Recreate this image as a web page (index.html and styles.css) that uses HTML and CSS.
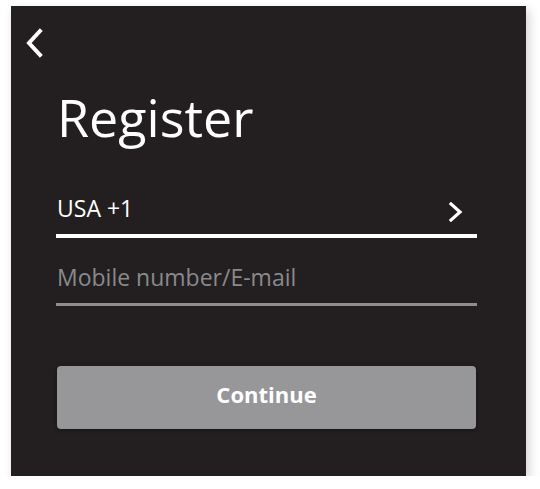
FILE: index.html
```html
<!DOCTYPE html>
<html lang="en">
<head>
<meta charset="utf-8">
<title>Register</title>
<link rel="stylesheet" href="styles.css">
</head>
<body>
<div class="panel">
  <div class="back">
    <svg width="20" height="30" viewBox="0 0 20 30"><polyline points="15,3 4,15 15,27" fill="none" stroke="#fff" stroke-width="4" stroke-linecap="square" stroke-linejoin="miter"/></svg>
  </div>
  <div class="content">
    <h1 class="title">Register</h1>
    <div class="field field-country">
      <span class="country">USA +1</span>
      <svg class="chev" width="14" height="20" viewBox="0 0 14 20"><polyline points="2,2 11,10 2,18" fill="none" stroke="#fff" stroke-width="3.2" stroke-linecap="square"/></svg>
    </div>
    <div class="field field-mobile">
      <span class="placeholder">Mobile number/E-mail</span>
    </div>
    <button class="btn">Continue</button>
  </div>
</div>
</body>
</html>
```
FILE: styles.css
```css
html, body {
  margin: 0;
  padding: 0;
  background: #ffffff;
}
body {
  font-family: "Open Sans", "Noto Sans", sans-serif;
}
.panel {
  margin: 6px 0 0 11px;
  width: 515px;
  height: 470px;
  background: #231f20;
  box-shadow: 3px 4px 10px rgba(0, 0, 0, 0.18);
  display: flex;
  flex-direction: column;
}
.back {
  height: 30px;
  margin: 22px 0 0 14px;
}
.back svg {
  display: block;
}
.content {
  padding: 0 49px 0 45px;
  display: flex;
  flex-direction: column;
}
.title {
  margin: 29px 0 0 1px;
  font-weight: 400;
  font-size: 52px;
  line-height: 60px;
  color: #ffffff;
}
.field {
  display: flex;
  align-items: flex-start;
  justify-content: space-between;
  box-sizing: border-box;
}
.field-country {
  margin-top: 47px;
  height: 44px;
  border-bottom: 4px solid #ffffff;
  padding: 0 14px 0 1px;
}
.country {
  font-size: 23px;
  line-height: 28px;
  color: #ffffff;
}
.chev {
  display: block;
  margin-top: 8px;
}
.field-mobile {
  margin-top: 25px;
  height: 43px;
  border-bottom: 3px solid #8e8e90;
  padding-left: 1px;
}
.placeholder {
  font-size: 23px;
  line-height: 28px;
  color: #8a8a8c;
}
.btn {
  margin-top: 60px;
  margin-left: 1px;
  width: 419px;
  height: 63px;
  border: none;
  border-radius: 4px;
  background: #97979a;
  color: #ffffff;
  font-family: "Open Sans", "Noto Sans", sans-serif;
  font-weight: 700;
  font-size: 22px;
  box-shadow: 0 1px 4px rgba(0, 0, 0, 0.35);
  padding: 0 0 7px 0;
}
```
